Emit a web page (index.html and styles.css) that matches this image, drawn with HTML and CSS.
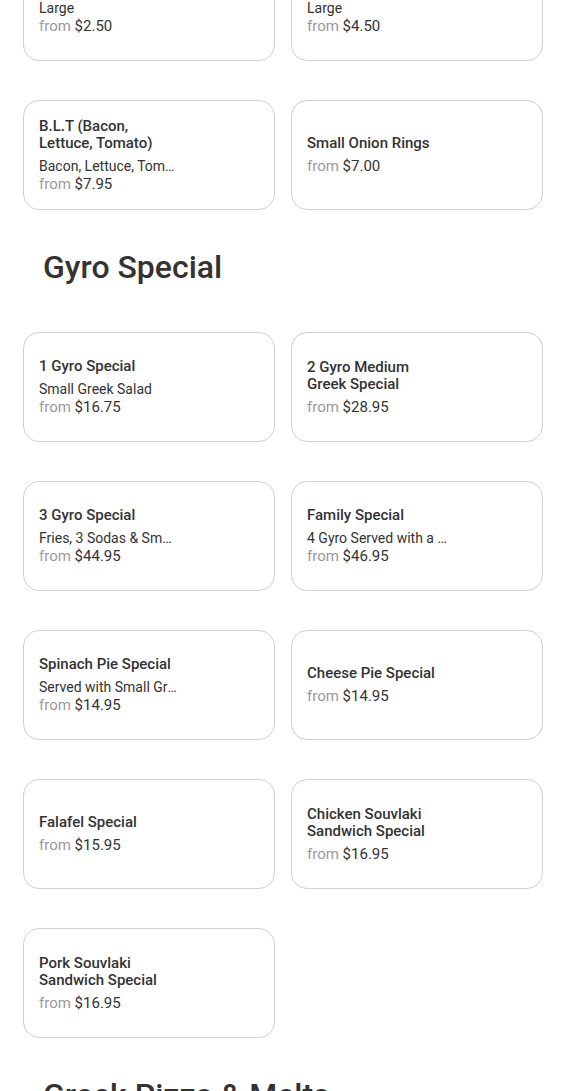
FILE: index.html
```html
<!DOCTYPE html>
<html lang="en">
<head>
    <meta charset="UTF-8">
    <meta name="viewport" content="width=device-width, initial-scale=1.0">
    <title>Menu</title>
    <link rel="stylesheet" href="styles.css">
</head>
<body>
    <div class="menu">
        <div class="item-grid first">
            <div class="item-card">
                <div class="item-info">
                    <div class="item-name">French Fries</div>
                    <div class="item-desc">Large</div>
                    <div class="item-price"><span class="from">from</span> $2.50</div>
                </div>
            </div>
            <div class="item-card">
                <div class="item-info">
                    <div class="item-name">Cheese Fries</div>
                    <div class="item-desc">Large</div>
                    <div class="item-price"><span class="from">from</span> $4.50</div>
                </div>
            </div>
            <div class="item-card">
                <div class="item-info">
                    <div class="item-name">B.L.T (Bacon, Lettuce, Tomato)</div>
                    <div class="item-desc">Bacon, Lettuce, Tomato on Toast</div>
                    <div class="item-price"><span class="from">from</span> $7.95</div>
                </div>
            </div>
            <div class="item-card">
                <div class="item-info">
                    <div class="item-name">Small Onion Rings</div>
                    <div class="item-price"><span class="from">from</span> $7.00</div>
                </div>
            </div>
        </div>

        <h2 class="category">Gyro Special</h2>
        <div class="item-grid">
            <div class="item-card">
                <div class="item-info">
                    <div class="item-name">1 Gyro Special</div>
                    <div class="item-desc">Small Greek Salad</div>
                    <div class="item-price"><span class="from">from</span> $16.75</div>
                </div>
            </div>
            <div class="item-card">
                <div class="item-info">
                    <div class="item-name">2 Gyro Medium Greek Special</div>
                    <div class="item-price"><span class="from">from</span> $28.95</div>
                </div>
            </div>
            <div class="item-card">
                <div class="item-info">
                    <div class="item-name">3 Gyro Special</div>
                    <div class="item-desc">Fries, 3 Sodas &amp; Small Greek Salad</div>
                    <div class="item-price"><span class="from">from</span> $44.95</div>
                </div>
            </div>
            <div class="item-card">
                <div class="item-info">
                    <div class="item-name">Family Special</div>
                    <div class="item-desc">4 Gyro Served with a Large Greek Salad</div>
                    <div class="item-price"><span class="from">from</span> $46.95</div>
                </div>
            </div>
            <div class="item-card">
                <div class="item-info">
                    <div class="item-name">Spinach Pie Special</div>
                    <div class="item-desc">Served with Small Greek Salad</div>
                    <div class="item-price"><span class="from">from</span> $14.95</div>
                </div>
            </div>
            <div class="item-card">
                <div class="item-info">
                    <div class="item-name">Cheese Pie Special</div>
                    <div class="item-price"><span class="from">from</span> $14.95</div>
                </div>
            </div>
            <div class="item-card">
                <div class="item-info">
                    <div class="item-name">Falafel Special</div>
                    <div class="item-price"><span class="from">from</span> $15.95</div>
                </div>
            </div>
            <div class="item-card">
                <div class="item-info">
                    <div class="item-name">Chicken Souvlaki Sandwich Special</div>
                    <div class="item-price"><span class="from">from</span> $16.95</div>
                </div>
            </div>
            <div class="item-card">
                <div class="item-info">
                    <div class="item-name">Pork Souvlaki Sandwich Special</div>
                    <div class="item-price"><span class="from">from</span> $16.95</div>
                </div>
            </div>
        </div>

        <h2 class="category">Greek Pizza &amp; Melts</h2>
    </div>
</body>
</html>
```

FILE: styles.css
```css
body {
    margin: 0;
    font-family: Roboto, "Liberation Sans", sans-serif;
    background-color: white;
    color: #333;
}
.menu {
    width: 520px;
    margin-left: 23px;
}
.item-grid {
    display: grid;
    grid-template-columns: 1fr 1fr;
    column-gap: 16px;
    row-gap: 39px;
    margin-bottom: 39px;
}
.item-grid.first {
    margin-top: -49px;
}
.item-card {
    height: 110px;
    box-sizing: border-box;
    border: 1px solid #d0d0d0;
    border-radius: 16px;
    background-color: white;
    padding: 0 15px;
    display: flex;
    align-items: center;
}
.item-info {
    width: 140px;
}
.item-name {
    font-size: 15px;
    font-weight: 500;
    line-height: 17px;
    color: #333;
    margin-bottom: 5px;
}
.item-desc {
    font-size: 14px;
    line-height: 18px;
    color: #333;
    white-space: nowrap;
    overflow: hidden;
    text-overflow: ellipsis;
}
.item-price {
    font-size: 15px;
    line-height: 18px;
    color: #333;
}
.from {
    color: #999;
}
.category {
    margin: 0 0 47px 20px;
    font-size: 32px;
    font-weight: 500;
    line-height: 36px;
    color: #333;
}
```
